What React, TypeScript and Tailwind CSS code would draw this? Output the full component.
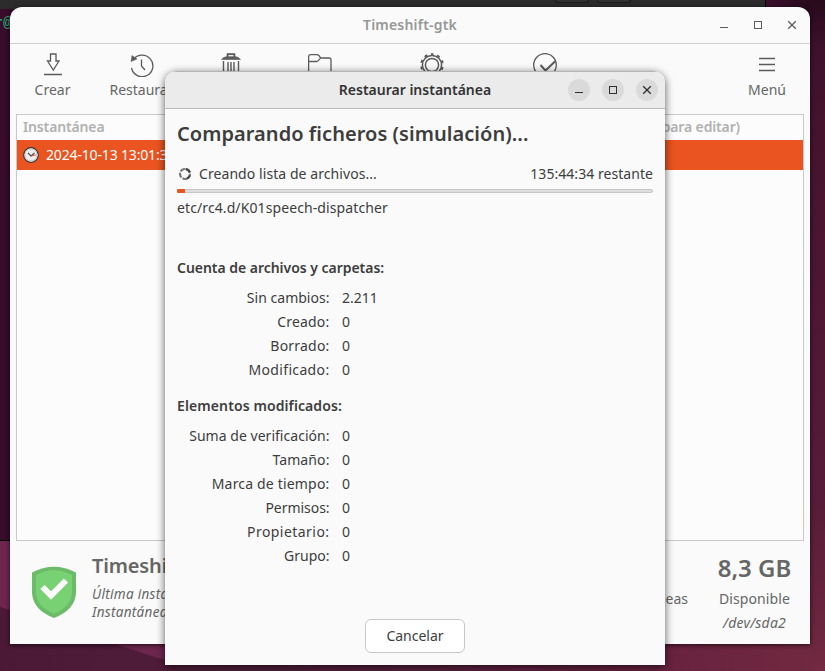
import type { ReactNode } from "react";

type Stat = { label: string; value: string; track: string };

const counts: Stat[] = [
  { label: "Sin cambios:", value: "2.211", track: "tracking-[0.020px]" },
  { label: "Creado:", value: "0", track: "tracking-[0.200px]" },
  { label: "Borrado:", value: "0", track: "tracking-[0.200px]" },
  { label: "Modificado:", value: "0", track: "tracking-[0.350px]" },
];

const changes: Stat[] = [
  { label: "Suma de verificación:", value: "0", track: "tracking-[0.030px]" },
  { label: "Tamaño:", value: "0", track: "tracking-[0.100px]" },
  { label: "Marca de tiempo:", value: "0", track: "tracking-[0.180px]" },
  { label: "Permisos:", value: "0", track: "tracking-[-0.050px]" },
  { label: "Propietario:", value: "0", track: "tracking-[0.450px]" },
  { label: "Grupo:", value: "0", track: "tracking-[0px]" },
];

function StatList({ rows }: { rows: Stat[] }) {
  return (
    <div className="flex flex-col">
      {rows.map((r) => (
        <div key={r.label} className="flex h-6 gap-3 leading-6">
          <span className={`w-[153px] pr-[0.500px] text-right ${r.track}`}>{r.label}</span>
          <span>{r.value}</span>
        </div>
      ))}
    </div>
  );
}

function WindowButtons({ filled }: { filled?: boolean }) {
  const cls = `flex size-[22px] items-center justify-center rounded-full ${filled ? "bg-[#dadada] text-[#2f2f2f]" : "text-[#5c5c5c]"}`;
  return (
    <div className="flex gap-3">
      <span className={cls}>
        <svg width="10" height="10" viewBox="0 0 10 10"><path d="M1 7.5h8" stroke="currentColor" /></svg>
      </span>
      <span className={cls}>
        <svg width="10" height="10" viewBox="0 0 10 10"><rect x="1.5" y="1.5" width="7" height="7" fill="none" stroke="currentColor" /></svg>
      </span>
      <span className={cls}>
        <svg width="10" height="10" viewBox="0 0 10 10"><path d="M1.2 1.2l7.6 7.6M8.8 1.2L1.2 8.8" stroke="currentColor" strokeWidth="1.3" /></svg>
      </span>
    </div>
  );
}

function Tool({ width, label, children }: { width: string; label?: string; children: ReactNode }) {
  return (
    <div className={`flex flex-col items-center ${width}`}>
      <svg width="24" height="24" viewBox="0 0 24 24" fill="none" stroke="#5b5b5b" strokeWidth="1.3">{children}</svg>
      {label && <span className="mt-[3px] h-5 leading-5 whitespace-nowrap">{label}</span>}
    </div>
  );
}

function Shield() {
  return (
    <svg width="44" height="53" viewBox="0 0 44 53">
      <path d="M0 6.500Q22-5 44 6.500V27Q43 44 22 52Q1 44 0 27Z" fill="#6cbb68" />
      <path d="M4 9Q22-.5 40 9V27Q39 41 22 47.500Q5 41 4 27Z" fill="#78d173" />
      <path d="M10.500 21L19 29.500L34 14.500" fill="none" stroke="#fff" strokeWidth="6" />
    </svg>
  );
}

function Spinner() {
  return (
    <svg width="14" height="14" viewBox="0 0 14 14" fill="none" strokeWidth="2.2">
      <circle cx="7" cy="7" r="5" stroke="#777" strokeDasharray="5 1.283" strokeDashoffset="1" />
      <path d="M7.500 2A5 5 0 0 1 11.800 5.500M11.800 8.500A5 5 0 0 1 9 11.600" stroke="#444" />
    </svg>
  );
}

function MainWindow() {
  return (
    <div className="absolute top-[7px] left-[10px] flex h-[637px] w-[800px] flex-col rounded-t-xl bg-[#fafafa] text-[#666] shadow-[0_1px_5px_rgba(0,0,0,0.7)]">
      <div className="flex h-[37px] items-center border-b border-[#d0d0d0] pr-[7px] pl-[97px]">
        <span className="flex-1 pb-[2px] text-center text-[14px] font-semibold tracking-[0.200px] text-[#979797]">Timeshift-gtk</span>
        <WindowButtons />
      </div>
      <div className="flex h-[70px] items-start pt-[9px] pl-[20px]">
        <Tool width="w-[45px]" label="Crear">
          <path d="M9.500 1h5.500v7h3l-5.700 9l-5.800-9h3zM3 21.500h18" />
        </Tool>
        <Tool width="ml-[34px] w-[65px]" label="Restaurar">
          <path d="M3 7A10.800 10.800 0 1 1 1.500 15M11.500 6.500v6.500l3.500 4" />
          <path d="M1 8.500L2 2.500l5 3.500z" fill="#5b5b5b" strokeWidth=".5" />
        </Tool>
        <Tool width="ml-[34px] w-[46px]">
          <path d="M2.500 6.500Q4 4 8 3.500V.6h8v2.900Q20 4 21.500 6.500z" fill="#5b5b5b" strokeWidth=".6" />
          <path d="M9.500 2.700h5" stroke="#fafafa" strokeWidth="1.300" />
          <path d="M4.500 8v15h15V8M9 9v12M12 9v12M15 9v12" strokeWidth="1.400" />
        </Tool>
        <Tool width="ml-[39px] w-[54px]">
          <path d="M.6 22V3.600Q.8 1.700 2.600 1.700H9Q11 1.700 12.500 5h8.500q2 0 2 2v15zM1 8.500h8Q10.500 8 12.500 5" />
        </Tool>
        <Tool width="ml-[55px] w-[60px]">
          <circle cx="12" cy="12" r="10.800" strokeWidth="2" strokeDasharray="3 3.786" strokeDashoffset="1.500" transform="rotate(-90 12 12)" />
          <circle cx="12" cy="12" r="9.600" strokeWidth="1.500" />
          <circle cx="12" cy="12" r="6.600" strokeWidth="1.500" />
        </Tool>
        <Tool width="ml-[53px] w-[60px]">
          <circle cx="12" cy="12" r="11.300" />
          <path d="M7.500 12l5 5.500L22.500 8" strokeWidth="2" />
        </Tool>
        <Tool width="ml-[161px] w-[62px]" label="Menú">
          <path d="M4 5.500h16M4 11.500h16M4 17.500h16" />
        </Tool>
      </div>
      <div className="mx-[6px] flex h-[427px] flex-col border border-[#c8c8c8] bg-[#fcfcfc]">
        <div className="flex h-[25px] justify-between pr-[63px] pl-[6px] text-[14px] leading-6 font-semibold tracking-[-0.140px] text-[#b1b1b1]">
          <span>Instantánea</span>
          <span>Comentarios (doble clic para editar)</span>
        </div>
        <div className="flex h-[30px] items-center bg-[#e95420] pl-[6px] text-[#fff]">
          <svg width="16" height="16" viewBox="0 0 16 16" fill="none">
            <circle cx="8" cy="8" r="7.300" fill="#eee" stroke="#36383a" strokeWidth="1.200" />
            <circle cx="8" cy="8" r="6" stroke="#c8c8c8" />
            <path d="M5 6L8 9l3.500-3" stroke="#444" strokeWidth="1.100" />
            <path d="M8 9l5-1" stroke="#e43b2e" strokeWidth=".8" />
          </svg>
          <span className="ml-[7px] pb-[2px] tracking-[-0.160px]">2024-10-13 13:01:35</span>
        </div>
      </div>
      <div className="flex flex-1 pl-[22px]">
        <div className="shrink-0 pt-[25px]"><Shield /></div>
        <div className="ml-[16px] flex-1 pt-[11px]">
          <div className="text-[20px] leading-[28px] font-semibold tracking-[-0.150px]">Timeshift</div>
          <div className="pt-[5px] text-[13.500px] leading-[18px] tracking-[0.300px] italic">
            <div>Última instantánea: 2024-10-13 13:01:35</div>
            <div>Instantánea más antigua: 2024-10-13 13:01:35</div>
          </div>
        </div>
        <div className="mr-[11px] flex shrink-0 flex-col items-end pt-[46px]">
          <span className="h-6 leading-6">Instantáneas</span>
        </div>
        <div className="flex w-[111px] shrink-0 flex-col items-center pt-[13px]">
          <span className="text-[24px] leading-[28px] font-semibold whitespace-nowrap">8,3 GB</span>
          <span className="mt-[5px] h-6 leading-6 tracking-[0.100px]">Disponible</span>
          <span className="h-6 leading-6 tracking-[0.200px] italic">/dev/sda2</span>
        </div>
      </div>
    </div>
  );
}

function RestoreDialog() {
  return (
    <div className="absolute top-[71px] left-[165px] flex h-[594px] w-[500px] flex-col overflow-hidden rounded-t-xl bg-[#fafafa] text-[#3d3d3d]">
      <div className="flex h-[38px] shrink-0 items-center border-t border-b border-t-[#b4b4b4] border-b-[#b8b8b8] bg-[#ebebeb] pr-[7px] pl-[97px]">
        <span className="flex-1 pb-[2px] text-center text-[14px] font-semibold text-[#333]">Restaurar instantánea</span>
        <WindowButtons filled />
      </div>
      <div className="flex flex-1 flex-col px-3 pt-[10px]">
        <h1 className="h-[30px] text-[20px] leading-[30px] font-semibold tracking-[0.050px] whitespace-nowrap">Comparando ficheros (simulación)...</h1>
        <div className="mt-[13px] flex h-6 items-center pl-[1px]">
          <Spinner />
          <span className="ml-[7px] pb-[2px] tracking-[0.070px]">Creando lista de archivos...</span>
          <span className="ml-auto pb-[2px] tracking-[0.050px]">135:44:34 restante</span>
        </div>
        <div className="mt-[3px] h-1 shrink-0 rounded-[2px] border border-[#c6c6c6] bg-[#dedede]">
          <div className="-mt-px -ml-px h-1 w-2 rounded-l-[1px] bg-[#e95420]" />
        </div>
        <span className="mt-[3px] h-6 leading-6 tracking-[0.100px]">etc/rc4.d/K01speech-dispatcher</span>
        <h2 className="mt-[36px] mb-[6px] h-6 leading-6 font-semibold tracking-[-0.030px]">Cuenta de archivos y carpetas:</h2>
        <StatList rows={counts} />
        <h2 className="mt-3 mb-[6px] h-6 leading-6 font-semibold tracking-[0.100px]">Elementos modificados:</h2>
        <StatList rows={changes} />
        <button className="mx-auto mt-[51px] h-[34px] w-[100px] rounded-[6px] border border-[#c6c6c6] bg-white pb-[2px]">Cancelar</button>
      </div>
    </div>
  );
}

export default function App() {
  return (
    <div className="relative h-[671px] w-[825px] overflow-hidden bg-[linear-gradient(90deg,#4b1936_0%,#54203c_45%,#66213e_75%,#722941_100%)] font-['Noto_Sans',sans-serif] text-[14px]">
      <svg className="absolute inset-0" width="825" height="671">
        <defs>
          <linearGradient id="side" x1="0" y1="0" x2="0" y2="1">
            <stop offset="0" stopColor="#3b102b" />
            <stop offset=".2" stopColor="#45132e" />
            <stop offset=".75" stopColor="#571c38" />
            <stop offset="1" stopColor="#722941" />
          </linearGradient>
          <linearGradient id="corner" x1="0" y1="0" x2="1" y2="0">
            <stop offset="0" stopColor="#1c0612" stopOpacity="0" />
            <stop offset="1" stopColor="#1c0612" stopOpacity=".6" />
          </linearGradient>
          <linearGradient id="fade" x1="0" y1="0" x2="0" y2="1">
            <stop offset="0" stopColor="#1c0612" stopOpacity=".6" />
            <stop offset="1" stopColor="#1c0612" stopOpacity="0" />
          </linearGradient>
        </defs>
        <rect x="810" width="15" height="671" fill="url(#side)" />
        <rect x="766" width="44" height="30" fill="#3b102b" />
        <rect x="766" width="44" height="22" fill="url(#corner)" />
        <rect x="810" width="15" height="50" fill="url(#fade)" />
        <path d="M0 540h10v70L0 607zM115 644h52v17z" fill="#6e264e" />
      </svg>
      <div className="absolute top-0 left-0 h-[541px] w-[766px] overflow-hidden border-r border-b border-black bg-[#380c2a]">
        <div className="flex h-[9px] items-start justify-start gap-2 bg-[#2c2c2c] pl-[555px]">
          <span className="h-[3px] w-[34px] rounded-b-md border border-t-0 border-[#1c1c1c] bg-[#323232]" />
          <span className="h-[3px] w-[34px] rounded-b-md border border-t-0 border-[#1c1c1c] bg-[#323232]" />
        </div>
        <div className="-ml-[6px] pt-[4px] font-['Liberation_Mono',monospace] text-[15px] font-bold text-[#26a269]">r@</div>
      </div>
      <MainWindow />
      <div className="absolute top-[71px] left-[165px] h-[594px] w-[500px] rounded-t-xl shadow-[0_2px_9px_rgba(0,0,0,0.65)]" />
      <RestoreDialog />
    </div>
  );
}
